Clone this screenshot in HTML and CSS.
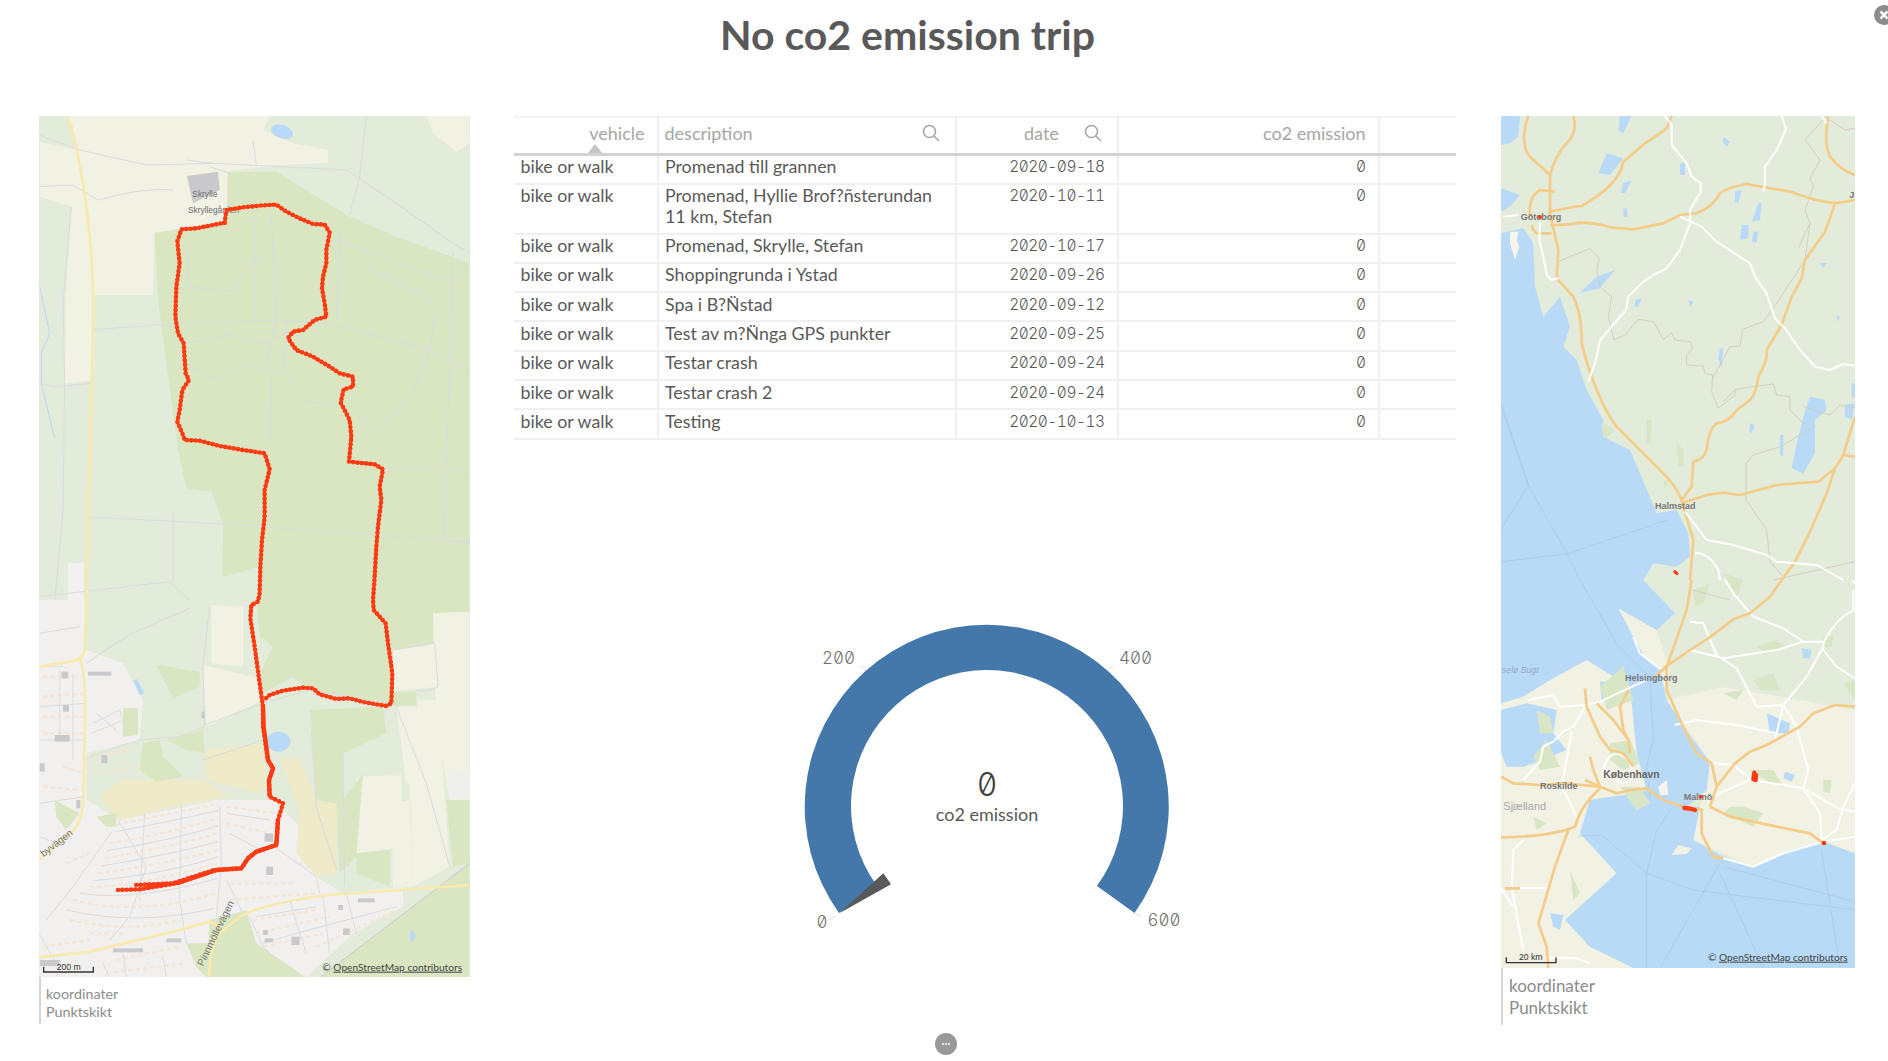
FILE: index.html
```html
<!DOCTYPE html>
<html lang="sv">
<head>
<meta charset="utf-8">
<title>No co2 emission trip</title>
<link rel="stylesheet" href="styles.css">
</head>
<body>
<h1 class="title">No co2 emission trip</h1>
<main class="sheet">
  <section class="panel panel-left">
    <svg class="map map-left" viewBox="28 48 1293 2583" preserveAspectRatio="none">
      <rect class="m-base" x="28" y="48" width="1293" height="2583"/>
      <polygon class="m-cream" points="115,48 720,48 700,90 790,130 895,150 895,190 740,195 595,215 590,370 375,398 370,585 195,585 190,840 105,850 110,580 125,320 30,290 30,125 140,150"/>
      <polygon class="m-forest2" points="830,48 1190,48 1320,130 1320,490 1100,410 950,345 740,215 895,190 895,150"/>
      <polygon class="m-cream" points="1190,48 1320,48 1320,130 1280,155 1210,100"/>
      <polygon class="m-grey" points="472,228 565,215 570,270 490,310"/>
      <polygon class="m-forest" points="595,215 740,215 950,345 1100,410 1320,490 1320,1535 1210,1540 1215,1630 1090,1650 1085,1815 840,1770 790,1730 700,1780 690,1720 730,1640 690,1610 680,1500 690,1400 578,1430 580,1270 545,1175 470,1165 445,1050 385,600 375,398 590,365"/>
      <rect class="m-cream2" x="115" y="1390" width="48" height="110"/>
      <ellipse class="m-water" cx="757" cy="95" rx="34" ry="20" transform="rotate(18 757 95)"/>
      <g transform="translate(0,1500)">
        <polygon class="m-resi" points="28,0 165,0 170,150 280,190 340,300 330,420 170,460 170,600 270,660 560,600 730,600 810,680 810,760 860,830 940,880 1120,860 1120,920 970,1000 830,1133 28,1133"/>
        <polygon class="m-forest" points="540,960 650,930 680,1030 830,1133 530,1133"/>
        <polygon class="m-forest" points="970,1060 1320,790 1320,1133 870,1133"/>
        <polygon class="m-forest" points="470,1030 540,1030 530,1133 500,1100"/>
        <polygon class="m-cream" points="1090,150 1215,130 1225,260 1090,275"/>
        <polygon class="m-cream" points="1210,40 1320,35 1320,600 1260,600 1230,440 1215,260"/>
        <polygon class="m-cream" points="1100,320 1160,320 1190,550 1130,550"/>
        <polygon class="m-cream" points="1165,300 1225,300 1260,800 1150,860 1140,550"/>
        <polygon class="m-cream" points="980,530 1115,525 1120,740 980,760"/>
        <polygon class="m-cream" points="1090,610 1140,600 1150,860 1090,860"/>
        <polygon class="m-cream" points="520,195 690,235 700,300 530,380"/>
        <polygon class="m-cream" points="545,15 640,20 640,200 545,190"/>
        <polygon class="m-tan" points="530,450 700,430 710,560 690,580 530,540"/>
        <polygon class="m-tan" points="750,470 810,480 860,600 920,610 920,820 860,830 800,760 810,640"/>
        <polygon class="m-tan" points="210,590 270,540 520,540 600,590 430,620 270,660"/>
        <polygon class="m-forest" points="380,195 510,215 510,260 430,295"/>
        <polygon class="m-forest" points="280,325 325,325 325,405 280,410"/>
        <polygon class="m-forest" points="340,430 390,420 400,470 460,530 380,545 330,510"/>
        <polygon class="m-forest" points="410,420 520,390 525,460 470,450"/>
        <polygon class="m-forest" points="840,330 1060,320 1070,400 940,460 850,450"/>
        <polygon class="m-forest" points="850,450 940,460 940,600 1000,520 980,770 930,820 920,610 860,600"/>
        <polygon class="m-forest" points="1250,600 1320,600 1320,790 1270,800"/>
        <polygon class="m-forest" points="980,760 1080,750 1080,860 980,820"/>
        <polygon class="m-forest" points="75,600 150,640 110,690 80,650"/>
        <polygon class="m-forest" points="1090,275 1160,275 1160,315 1090,318"/>
        <polygon class="m-forest" points="200,650 260,640 260,680 230,680"/>
        <rect class="m-white" x="1258" y="515" width="62" height="82"/>
        <ellipse class="m-water" cx="746" cy="425" rx="36" ry="30"/>
        <polygon class="m-water" points="310,240 322,238 345,280 330,286"/>
        <ellipse class="m-water" cx="1148" cy="1008" rx="8" ry="18"/>
      </g>
      <g class="m-path">
        <path d="M28,105 L150,150 L350,195 L550,190 L750,200 L950,210 L1100,310 L1270,430 L1320,460"/>
        <path d="M28,260 L130,255 L205,300 Q350,260 430,270"/>
        <path d="M125,320 L100,600 L105,850 L100,1240 L75,1500"/>
        <path d="M190,690 L370,675 L740,660 L900,670 L1200,750 L1320,810"/>
        <path d="M28,850 L70,860 L180,850"/>
        <path d="M175,1250 L580,1272 L1320,1325"/>
        <path d="M470,180 L550,190 M600,220 L540,200 M670,125 L680,190"/>
        <path d="M675,350 L675,660 M725,345 L740,660 L705,815 L765,815 L770,660"/>
        <path d="M725,835 L720,1040 M480,440 L470,560 L610,575 L650,500 L700,480"/>
        <path d="M465,730 L600,705 L700,730 L770,700 M480,800 L560,840 L640,790 L700,815"/>
        <path d="M930,400 L920,660 M920,420 L1270,550 L1320,490"/>
        <path d="M1270,460 L1250,1100 L1245,1320 L1320,1330"/>
        <path d="M770,815 L830,905 L930,915 L1050,990 L1150,880 L1200,750 L1215,640 L1190,590 L1010,500"/>
        <path d="M1060,1105 L1265,1105 L1320,1130"/>
        <path d="M430,1240 L430,1445 M28,1490 L420,1445 L480,1500"/>
        <path d="M990,230 L960,345 M1010,48 L990,230"/>
      </g>
      <path class="m-stream" d="M30,560 L60,700 L35,760 L35,850 L75,1015"/>
      <path class="m-road" d="M115,48 C150,150 190,400 190,600 C190,800 175,1200 170,1500"/>
      <g transform="translate(0,1500)">
        <g class="m-homes">
          <path d="M260,675 Q420,640 565,612"/>
          <path d="M240,730 Q420,700 565,655"/>
          <path d="M225,775 Q420,740 565,700"/>
          <path d="M205,820 Q420,790 565,750"/>
          <path d="M180,860 Q320,860 565,790"/>
          <path d="M130,900 Q320,950 560,880"/>
          <path d="M120,960 Q300,1000 450,960"/>
          <path d="M590,620 L740,640 M590,670 L720,700 M600,850 L800,850 M600,900 L860,880"/>
          <path d="M670,960 L860,930 M680,1000 L900,950 M700,1040 L880,1000 M860,1040 L1100,930"/>
          <path d="M40,230 L160,230 M40,290 L160,280 M40,350 L160,350 M40,400 L160,400"/>
          <path d="M100,500 L160,520 M180,480 L320,440 M180,520 L320,500 M40,560 L150,570"/>
          <path d="M40,1040 L180,1020 M260,1080 L450,1040 M230,1120 L460,1090"/>
          <path d="M110,790 L180,760 M180,1000 L280,1000 M790,780 L900,830"/>
        </g>
        <g class="m-path">
          <path d="M540,20 L520,200 L525,380 L450,410 L330,420 L180,470"/>
          <path d="M170,190 Q300,100 330,90 L480,25"/>
          <path d="M525,375 L700,310 L840,270 L1090,315"/>
          <path d="M1090,150 L1215,130 L1225,260 Q1190,280 1160,270"/>
          <path d="M1100,320 L1190,550 L1260,800 M940,460 L945,860"/>
          <path d="M845,400 L860,620 L920,810 M520,480 L700,420"/>
          <path d="M265,660 L350,800 L300,950 L240,1020 M345,640 L330,900 M455,620 L450,900 L470,1030"/>
          <path d="M570,620 L575,800 L560,950 M250,690 L130,860 L50,960"/>
          <path d="M590,840 L650,960 M740,745 L860,830 L870,880 M660,950 L700,1040 L800,1133"/>
          <path d="M780,900 L830,1060 M880,890 L900,1060 M950,880 L980,1000"/>
          <path d="M700,1030 L800,1000 L950,960 L1100,920 M680,950 L860,920"/>
          <path d="M30,100 L150,80 M30,200 L100,200 M90,210 L90,420 M130,220 L130,480 M30,320 L170,310 M30,420 L170,420"/>
          <path d="M30,610 L165,590 M30,710 L80,730 M28,1000 L100,1130 M220,1090 L240,1133 M400,1070 L410,1133 M280,1060 L290,1133"/>
          <path d="M255,695 Q420,665 565,632 M232,752 Q420,722 565,678 M215,798 Q420,765 565,725 M192,842 Q420,820 565,770"/>
          <path d="M150,880 Q320,905 565,835 M110,930 Q320,980 555,925 M600,700 L710,760 M590,640 L720,660"/>
          <path d="M190,370 L270,330 L290,400 M200,340 L260,390 M185,400 L270,365"/>
        </g>
        <g class="m-grey">
          <rect x="95" y="215" width="20" height="20"/>
          <rect x="175" y="215" width="70" height="12"/>
          <rect x="100" y="315" width="18" height="20"/>
          <rect x="75" y="405" width="45" height="20"/>
          <rect x="215" y="465" width="18" height="25"/>
          <rect x="30" y="490" width="15" height="25"/>
          <rect x="140" y="600" width="12" height="25"/>
          <rect x="705" y="700" width="25" height="25"/>
          <rect x="710" y="800" width="20" height="25"/>
          <rect x="515" y="335" width="10" height="20"/>
          <rect x="250" y="1045" width="90" height="12"/>
          <rect x="410" y="1015" width="45" height="12"/>
          <rect x="700" y="990" width="15" height="15"/>
          <rect x="705" y="1015" width="25" height="12"/>
          <rect x="785" y="1010" width="25" height="25"/>
          <rect x="940" y="985" width="20" height="20"/>
          <rect x="985" y="895" width="50" height="12"/>
          <rect x="925" y="915" width="15" height="15"/>
          <rect x="30" y="1080" width="60" height="18"/>
        </g>
        <path class="m-rail" d="M870,1133 L1320,790"/>
        <path class="m-road" d="M170,0 L165,150 Q160,180 120,185 L28,200"/>
        <path class="m-road" d="M150,180 Q170,200 165,400 L160,620 Q150,680 120,700 L28,780"/>
        <path class="m-road" d="M28,1072 L180,1055 L410,1000 L540,965 Q565,975 580,990"/>
        <path class="m-road" d="M538,1133 Q540,1040 570,1000 L630,950 Q700,910 900,885 L1320,855"/>
        <text class="m-street" x="42" y="772" transform="rotate(-38 42 772)">byvägen</text>
        <text class="m-street" x="520" y="1100" transform="rotate(-64 520 1100)">Pinnmöllevägen</text>
        <text class="m-scale" x="81" y="1110">200 m</text>
        <path class="m-bar" d="M42,1100 V1116 H191 V1100"/>
        <text class="m-attr" x="878" y="1112">© <tspan class="m-under">OpenStreetMap contributors</tspan></text>
      </g>
      <text class="m-label" x="488" y="290">Skrylle</text>
      <text class="m-label" x="475" y="340">Skryllegården</text>
      <defs>
        <g id="route-lines">
          <path d="M585,368 L590,330 L640,322 L700,316 L740,314 L770,335 L810,355 L850,372 L885,374 L900,398 L890,450 L890,490 L880,530 L877,565 L885,610 L890,650 L855,660 L820,690 L790,695 L775,715 L800,750 L850,770 L900,800 L930,820 L970,830 L970,860 L942,868 L933,908 L960,960 L965,1010 L958,1085 L1035,1093 L1060,1108 L1050,1160 L1055,1200 L1045,1280 L1040,1340 L1035,1430 L1030,1500 L1032,1530 L1068,1570 L1075,1630 L1088,1720 L1085,1810 L1070,1818 L1000,1806 L960,1795 L920,1797 L870,1783 L850,1765 L820,1763 L760,1772 L720,1785 L705,1798"/>
          <path d="M585,368 L545,376 L500,385 L455,388 L443,425 L450,490 L440,560 L437,650 L445,700 L462,730 L468,820 L478,840 L458,870 L450,930 L443,965 L458,1000 L465,1020 L510,1022 L570,1038 L640,1050 L705,1060 L720,1108 L705,1170 L705,1250 L697,1320 L692,1400 L690,1480 L685,1505 L665,1515 L662,1555 L675,1640 L690,1750 L700,1820 L700,1880 L715,1980 L730,2005 L718,2040 L720,2090 L760,2110 L745,2160 L740,2235 L680,2255 L655,2275 L635,2305 L560,2310 L440,2350 L330,2368 L262,2370"/>
          <path d="M320,2355 L430,2350 L560,2308"/>
        </g>
      </defs>
      <use class="route-core" href="#route-lines"/>
      <use class="route-dots" href="#route-lines"/>
      <path class="route-thick" d="M700,1820 L702,1880 L715,1980 L730,2005 L718,2040 L720,2090 M745,2160 L740,2235 L680,2255 L655,2275 L635,2305 L560,2310 L440,2350"/>
    </svg>
    <div class="caption caption-left">koordinater<br>Punktskikt</div>
  </section>

  <section class="center">
    <table class="grid">
      <colgroup>
        <col class="c1"><col class="c2"><col class="c3"><col class="c4"><col class="c5">
      </colgroup>
      <thead>
        <tr>
          <th class="num sorted">vehicle<span class="sort-arrow"></span></th>
          <th class="txt"><span class="head-flex">description<svg class="search" viewBox="0 0 18 18"><circle cx="7.5" cy="7.5" r="6"/><path d="M12 12l5 5"/></svg></span></th>
          <th class="num"><span class="head-flex head-date">date<svg class="search" viewBox="0 0 18 18"><circle cx="7.5" cy="7.5" r="6"/><path d="M12 12l5 5"/></svg></span></th>
          <th class="num">co2 emission</th>
          <th></th>
        </tr>
      </thead>
      <tbody>
        <tr><td>bike or walk</td><td>Promenad till grannen</td><td class="mono">2020-09-18</td><td class="mono">0</td><td></td></tr>
        <tr><td>bike or walk</td><td>Promenad, Hyllie Brof?ñsterundan 11 km, Stefan</td><td class="mono">2020-10-11</td><td class="mono">0</td><td></td></tr>
        <tr><td>bike or walk</td><td>Promenad, Skrylle, Stefan</td><td class="mono">2020-10-17</td><td class="mono">0</td><td></td></tr>
        <tr><td>bike or walk</td><td>Shoppingrunda i Ystad</td><td class="mono">2020-09-26</td><td class="mono">0</td><td></td></tr>
        <tr><td>bike or walk</td><td>Spa i B?N̈stad</td><td class="mono">2020-09-12</td><td class="mono">0</td><td></td></tr>
        <tr><td>bike or walk</td><td>Test av m?N̈nga GPS punkter</td><td class="mono">2020-09-25</td><td class="mono">0</td><td></td></tr>
        <tr><td>bike or walk</td><td>Testar crash</td><td class="mono">2020-09-24</td><td class="mono">0</td><td></td></tr>
        <tr><td>bike or walk</td><td>Testar crash 2</td><td class="mono">2020-09-24</td><td class="mono">0</td><td></td></tr>
        <tr><td>bike or walk</td><td>Testing</td><td class="mono">2020-10-13</td><td class="mono">0</td><td></td></tr>
      </tbody>
    </table>
    <svg class="gauge" viewBox="780 600 420 340">
      <path class="g-arc" d="M839,913 A182,182 0 1 1 1134.5,913 L1097,886 A136,136 0 1 0 877,886 Z"/>
      <path class="g-tick" d="M835,916 L829,920 M860,665.5 L866,670.5 M1113,665.5 L1108,670.5 M1135,913 L1141,917"/>
      <polygon class="g-needle" points="839.3,913.3 883.3,873.3 891,884.3"/>
      <text class="g-scale" x="838.5" y="664" text-anchor="middle">200</text>
      <text class="g-scale" x="1135.5" y="664" text-anchor="middle">400</text>
      <text class="g-scale" x="822" y="928" text-anchor="middle">0</text>
      <text class="g-scale" x="1164" y="926" text-anchor="middle">600</text>
      <text class="g-value" x="987" y="796" text-anchor="middle">0</text>
      <text class="g-label" x="987" y="821" text-anchor="middle">co2 emission</text>
    </svg>
  </section>

  <section class="panel panel-right">
    <svg class="map map-right" viewBox="33 48 1062 2556" preserveAspectRatio="none">
      <rect class="r-land" x="33" y="48" width="1062" height="2556"/>
      <polygon class="m-cream" points="530,1800 700,1760 1095,1830 1095,2260 1000,2225 790,2300 610,2220 630,2120 650,2070 660,1985"/>
      <polygon class="m-cream" points="385,1525 500,1590 540,1710 510,1800 470,1680 430,1610"/>
      <polygon class="m-cream" points="33,1810 180,1740 290,1680 420,1760 470,2070 400,2085 300,2100 270,2200 380,2320 225,2460 300,2540 430,2604 33,2604"/>
      <polygon class="m-water" points="33,400 100,385 130,430 135,560 160,650 210,590 240,680 220,740 260,780 290,870 340,960 340,1010 420,1050 450,1120 500,1240 560,1230 595,1300 600,1370 560,1400 490,1390 460,1440 555,1540 500,1590 385,1525 430,1610 470,1680 510,1710 530,1800 580,1880 660,1985 650,2070 590,2120 630,2120 610,2220 700,2270 790,2300 900,2250 1000,2225 1095,2260 1095,2604 430,2604 300,2540 225,2460 380,2320 270,2200 300,2100 400,2085 470,2070 440,1960 420,1760 290,1680 180,1740 100,1790 33,1810"/>
      <polygon class="m-cream" points="545,2265 565,2235 605,2245 590,2262"/>
      <g class="m-water">
        <polygon points="33,48 90,48 85,110 60,130 33,135"/>
        <polygon points="33,265 90,285 60,320 33,335"/>
        <polygon points="350,160 400,175 360,225 325,220"/>
        <polygon points="390,48 425,48 400,100 385,90"/>
        <polygon points="320,530 375,510 330,565 270,578"/>
        <polygon points="735,275 755,270 745,310 735,305"/>
        <polygon points="805,310 815,310 810,360 785,365"/>
        <polygon points="755,375 775,375 775,415 750,420"/>
        <polygon points="790,395 805,395 800,428 785,425"/>
        <polygon points="570,190 585,190 585,225 570,225"/>
        <polygon points="940,950 960,890 1005,900 1010,930 975,960 975,1060 940,1120 905,1105 920,1030"/>
        <polygon points="1085,850 1095,850 1095,895 1085,890"/>
        <polygon points="1065,915 1095,910 1085,960 1065,950"/>
        <polygon points="690,745 700,745 695,805 685,775"/>
        <polygon points="435,600 455,595 445,620 435,620"/>
        <polygon points="595,600 612,605 600,618"/>
        <polygon points="400,250 425,240 405,280 392,278"/>
        <polygon points="400,325 412,325 412,350 400,350"/>
        <polygon points="780,970 795,975 785,1000 778,995"/>
        <polygon points="870,1005 880,1005 880,1070 870,1065"/>
        <polygon points="1040,645 1050,650 1045,665"/>
        <polygon points="700,110 720,125 710,140 698,125"/>
        <polygon points="990,490 1010,490 1000,505"/>
        <polygon points="33,1830 110,1810 200,1830 190,1900 230,1950 130,1990 100,2000 50,2000 33,1960"/>
        <polygon points="330,1745 365,1745 350,1800 335,1800"/>
        <polygon points="50,1950 80,1960 60,1985"/>
        <polygon points="180,2440 220,2445 210,2490 190,2480"/>
        <polygon points="830,1840 900,1870 895,1900 840,1900"/>
        <polygon points="885,2015 915,2025 905,2045 880,2035"/>
        <polygon points="935,1645 965,1650 960,1675 940,1675"/>
      </g>
      <g class="r-green">
        <polygon points="470,960 485,960 480,1030 470,1030"/>
        <polygon points="335,965 375,990 350,1015 338,1005"/>
        <polygon points="560,1025 580,1050 580,1100 565,1095"/>
        <polygon points="520,1140 540,1145 525,1165"/>
        <polygon points="610,1470 660,1450 640,1510 615,1520"/>
        <polygon points="700,1420 760,1440 740,1490"/>
        <polygon points="800,1640 860,1620 890,1640 830,1660"/>
        <polygon points="700,1780 760,1770 740,1800"/>
        <polygon points="790,1740 850,1720 870,1770 810,1770"/>
        <polygon points="1000,1610 1030,1605 1025,1640 1000,1640"/>
        <polygon points="1000,2040 1025,2040 1020,2080 1000,2075"/>
        <polygon points="780,2010 850,2010 880,2060 840,2050"/>
        <polygon points="820,2140 760,2120 720,2120 700,2140 790,2180"/>
        <polygon points="1060,1750 1095,1740 1095,1800"/>
        <polygon points="330,1760 400,1700 430,1800 350,1830"/>
        <polygon points="360,1930 420,1920 450,1990 400,2010 360,1980"/>
        <polygon points="390,2060 450,2060 480,2110 440,2130"/>
        <polygon points="140,1830 180,1850 190,1900 150,1900"/>
        <polygon points="130,2150 170,2170 140,2190"/>
        <polygon points="240,2310 270,2380 250,2400"/>
        <polygon points="130,1970 170,1920 210,2000 150,2010"/>
      </g>
      <g class="r-white">
        <polygon points="60,395 85,395 80,420 88,440 75,480 60,430"/>
        <polygon points="505,2060 530,2040 535,2085 510,2085"/>
      </g>
      <g class="r-border">
        <path d="M205,485 L300,445 L328,475 L320,510 L330,560 L365,590 L355,650 L372,720 L405,705 L445,658 L490,665 L520,718 L545,698 L555,720 L600,725 L608,745 L590,765 L590,795 L640,798 L645,820 L668,825 L665,875 L685,925 L735,885 L735,868 L850,852 L860,885 L900,890 L900,930 L960,990"/>
        <path d="M735,870 L700,905 M668,835 L720,740 L750,738 L758,688 L820,665 L860,610 L945,480 L960,370 L925,445 M960,370 L945,330 L970,260 L960,235 L990,180 L945,120 L1010,48"/>
        <path d="M940,920 L1020,945 L1050,915 L1095,925 M965,985 L870,1040 L790,1065 L768,1090 L768,1200 L830,1290 L840,1385 L880,1430 M1020,60 L1065,90 L1095,85"/>
        <path d="M610,1470 L720,1500 M850,1440 L1095,1385"/>
      </g>
      <g class="r-sea">
        <path d="M33,905 L115,1155 L35,1285 M33,920 L115,1155 L230,1360 L270,1440"/>
        <path d="M33,1385 L230,1362 L530,1260"/>
        <path d="M270,1440 L380,1630 L480,1730 L490,1920 L470,2000 L480,2100"/>
        <path d="M265,2208 L335,2205 L470,2320 L610,2370 L1095,2430"/>
        <path d="M695,2280 L510,2604 M690,2320 L820,2604 M995,2250 L1050,2604 M700,2300 L1095,2405"/>
        <path d="M470,2320 L470,2604 M550,2120 L500,2190 L470,2320"/>
      </g>
      <g class="r-motor">
        <path d="M115,48 C95,100 100,150 120,170 L180,225 L180,340 L205,450 L200,535 L250,590 Q275,640 275,730 C300,830 340,930 380,980 L500,1100 C540,1140 570,1170 580,1220 L610,1320 L600,1440"/>
        <path d="M250,48 Q265,100 225,135 Q195,170 180,225"/>
        <path d="M180,335 Q250,320 275,318 C340,280 390,240 400,185 L465,130 Q510,100 530,85 L545,48"/>
        <path d="M180,375 Q240,375 270,368 Q330,370 360,382 L430,388 L520,370 L570,345 L620,340 Q670,320 690,280 Q710,262 770,252 L900,275 L970,298 L1035,310 L1095,300"/>
        <path d="M1035,310 Q1015,370 1005,395 L945,480 L935,535 L905,590 L875,675 L830,750 Q835,780 805,830 Q800,880 780,900 L740,930 Q720,965 680,970 Q655,990 650,1050 Q640,1080 610,1085 L605,1160 L575,1200"/>
        <path d="M575,1210 L650,1185 L700,1178 L750,1185 L860,1155 L985,1145 L1035,1105 L1060,1065 L1095,1070"/>
        <path d="M1035,1105 L1010,1180 L960,1295 L915,1385 L875,1440"/>
        <path d="M1095,950 L1060,1065"/>
        <path d="M1015,48 Q1000,130 1020,170 Q1050,210 1095,225"/>
        <path d="M120,345 Q115,290 150,270 L195,275 M125,375 Q130,400 145,400 L185,400"/>
      </g>
      <g class="r-minor">
        <path d="M525,48 L545,75 L545,135 L590,190 L605,230 L632,250 L632,275 L600,330 L600,370 L570,450 L530,505 L490,525 L460,545 L415,590 L408,630 L330,720 L318,780 L295,845"/>
        <path d="M570,350 L635,380 L680,425 L780,490 L795,530 L830,580 L855,655 L885,685 L930,750 L975,800 L1020,810 L1060,792 L1095,797"/>
        <path d="M875,48 L888,88 L860,150 L825,200 L825,250 L820,275"/>
        <path d="M995,48 L1010,70 M40,350 L85,345"/>
        <path d="M150,365 L148,420 L160,470 L170,525 L185,540 L205,535"/>
        <path d="M585,1235 L650,1320 L730,1335 L830,1365 L860,1385 L980,1395 L1060,1440"/>
        <path d="M615,1358 Q660,1360 685,1410 L690,1440"/>
      </g>
      <g transform="translate(0,1440)">
        <g class="r-minor">
          <path d="M705,0 L730,40 L790,110 L880,145 L940,185 L1000,185 L1000,210 L1040,260 L1095,295"/>
          <path d="M1000,190 Q1040,110 1095,90 M1085,0 L1095,10 M1090,30 V90"/>
          <path d="M600,125 L640,130 L660,180 L680,225 L740,265 L800,380 L880,375 L920,440 L955,570 L940,625 L990,700 L995,780"/>
          <path d="M600,210 L700,235 L860,210 L940,185"/>
          <path d="M1000,200 L950,290 L880,375 L855,480"/>
          <path d="M555,435 L620,420 L740,435 L860,460"/>
          <path d="M670,550 L730,555 L785,600 L940,625 L1045,685 L1095,695"/>
          <path d="M665,650 L780,600 M1095,610 L1060,680 L1040,750 L995,780"/>
          <path d="M430,170 L450,220 L510,265"/>
          <path d="M115,360 L190,345 L210,380 L285,375 L330,365 L415,325 L470,300"/>
          <path d="M285,380 L250,440 L220,455 L190,485 L160,500 L150,545 L100,600"/>
          <path d="M245,455 L215,620 L265,720"/>
          <path d="M340,590 Q340,530 380,520 Q440,540 420,600 Q400,620 380,600"/>
          <path d="M700,835 L790,860 L880,820 L1000,785 L1095,770"/>
          <path d="M100,780 L70,810 L65,920 L90,1060 L100,1110"/>
          <path d="M90,925 L175,925 M175,1133 L260,1135 L300,1150 M33,925 L70,980"/>
        </g>
        <g class="r-motor">
          <path d="M605,0 L590,90 L555,190 L530,260 L495,290"/>
          <path d="M875,0 L840,50 L780,100 L730,118 L655,175 L600,210 L520,265"/>
          <path d="M530,260 L530,330 L570,420 L620,520 L665,550 L680,620 L660,680"/>
          <path d="M1095,380 L1035,375 L970,400 L930,440 L830,495 L780,515 L735,550 L680,620"/>
          <path d="M660,680 L720,710 L860,740 L960,760 L1000,790"/>
          <path d="M635,690 L635,760 L670,830 L700,835"/>
          <path d="M640,690 L580,680 L520,660 L470,625 L420,630 L380,640 L330,620 L285,600"/>
          <path d="M330,625 Q270,680 255,740 Q180,770 33,772"/>
          <path d="M235,750 L195,860 L145,1030 L170,1100 L175,1163"/>
          <path d="M285,325 L290,380 L330,470 L360,510 L400,520 L430,560"/>
          <path d="M320,370 L370,420 L415,480 L420,520 M415,330 L390,380 L400,450 L420,490 M300,530 L310,570 L330,620"/>
          <path d="M33,590 L70,610 L150,615 L220,610 L330,620 M45,925 L90,925"/>
        </g>
        <text class="r-city" x="405" y="303">Helsingborg</text>
        <text class="r-big" x="340" y="593">København</text>
        <text class="r-city" x="150" y="627">Roskilde</text>
        <text class="r-city" x="581" y="660">Malmö</text>
        <text class="r-region" x="40" y="690">Sjælland</text>
        <text class="r-sealabel" x="36" y="280">selø Bugt</text>
        <text class="m-scale" x="87" y="1139">20 km</text>
        <path class="m-bar" d="M49,1132 V1148 H198 V1132"/>
        <text class="m-attr" x="654" y="1142">© <tspan class="m-under">OpenStreetMap contributors</tspan></text>
        <path class="r-hit" d="M793,578 L790,598 M798,585 L797,600"/>
        <circle class="r-dot" cx="632" cy="650" r="6"/>
        <circle class="r-dot" cx="1002" cy="789" r="7"/>
        <path class="r-hit" d="M583,684 L600,686 L615,690"/>
      </g>
      <text class="r-city" x="92" y="359">Göteborg</text>
      <text class="r-city" x="495" y="1226">Halmstad</text>
      <text class="r-city" x="1078" y="295">J</text>
      <circle class="r-dot" cx="150" cy="351" r="6"/>
      <path class="r-hit2" d="M554,1415 L561,1421"/>
    </svg>
    <div class="caption caption-right">koordinater<br>Punktskikt</div>
  </section>
</main>
<div class="more" aria-label="Mer"><span></span><span></span><span></span></div>
<div class="close" aria-label="Stäng"><svg viewBox="0 0 20 20"><path d="M6.5 6.5l7 7M13.500 6.500l-7 7"/></svg></div>
</body>
</html>
```
FILE: styles.css
```css
* { box-sizing: border-box; }
html, body { margin: 0; padding: 0; }
body {
  width: 1888px;
  height: 1061px;
  overflow: hidden;
  background: #fff;
  font-family: "Lato", "Liberation Sans", sans-serif;
  color: #595959;
  position: relative;
}
.title {
  margin: 0;
  height: 116px;
  padding: 11px 73px 0 0;
  text-align: center;
  font-family: "Lato", "Liberation Sans", sans-serif;
  font-weight: 700;
  font-size: 41px;
  line-height: 48px;
  color: #595959;
}
.sheet { display: flex; align-items: flex-start; padding-left: 39px; }
.panel { display: flex; flex-direction: column; }
.panel-left { width: 431px; }
.panel-right { width: 354px; margin-left: 45px; }
.map { display: block; width: 100%; }
.map-left { height: 861px; }
.map-right { height: 852px; }
.caption { border-left: 2px solid #d4d4d4; color: #8c8c8c; }
.caption-left { height: 47px; padding: 8px 0 0 5px; font-size: 14.300px; line-height: 18px; }
.caption-right { height: 57px; padding: 7px 0 0 6px; font-size: 17px; line-height: 22px; }

.center { width: 942px; margin-left: 44px; display: flex; flex-direction: column; }
.grid { width: 942px; table-layout: fixed; border-collapse: collapse; font-size: 17.800px; line-height: 20.500px; }
.c1 { width: 143.500px; } .c2 { width: 298.500px; } .c3 { width: 161.500px; } .c4 { width: 261px; } .c5 { width: 77.500px; }
.grid thead tr { border-top: 2px solid #f2f2f2; border-bottom: 3px solid #d2d2d2; }
.grid th {
  height: 37px;
  padding: 0 12px 5px 6px;
  font-size: 18px;
  font-weight: 400;
  color: #a6a6a6;
  text-align: left;
  border-right: 2px solid #f0f0f0;
  position: relative;
}
.grid th.num { text-align: right; }
.grid th:last-child, .grid td:last-child { border-right: 0; }
.grid td {
  padding: 0.500px 12px 6.300px 6.500px;
  vertical-align: top;
  border-right: 2px solid #f0f0f0;
  border-bottom: 2px solid #f0f0f0;
}
.grid td.mono {
  padding-top: 1.500px;
  padding-bottom: 5.300px;
  text-align: right;
  font-family: "Inter", monospace;
  font-size: 15.500px;
  font-weight: 300;
  letter-spacing: -0.500px;
  font-variant-numeric: tabular-nums slashed-zero;
  color: #595959;
}
.head-flex { display: flex; align-items: center; justify-content: space-between; padding-right: 3px; }
.head-date { padding-left: 61px; padding-right: 3px; }
.search { width: 18px; height: 18px; fill: none; stroke: #a6a6a6; stroke-width: 1.600; }
.sort-arrow {
  position: absolute;
  left: 74px;
  bottom: 0;
  border-left: 7px solid transparent;
  border-right: 7px solid transparent;
  border-bottom: 9px solid #c4c4c4;
}

.gauge { display: block; width: 420px; height: 340px; margin: 160px 0 0 266px; }
.g-arc { fill: #4477aa; }
.g-tick { stroke: #dcdcdc; stroke-width: 1; fill: none; }
.g-needle { fill: #595959; }
.g-scale { font-family: "Inter", monospace; font-weight: 300; font-variant-numeric: tabular-nums slashed-zero; font-size: 17px; fill: #707070; }
.g-value { font-family: "Inter", monospace; font-weight: 300; font-variant-numeric: tabular-nums slashed-zero; font-size: 32px; fill: #404040; }
.g-label { font-family: "Lato", "Liberation Sans", sans-serif; font-size: 18px; fill: #595959; }

.m-base { fill: #e3ebda; }
.m-cream { fill: #f1f1e4; }
.m-cream2 { fill: #f2f0ee; }
.m-forest { fill: #dae6c2; }
.m-forest2 { fill: #e3ebda; }
.m-grey { fill: #c9c9cc; }
.m-water { fill: #b9daf7; }
.m-resi { fill: #f2f0ee; }
.m-tan { fill: #efebc9; }
.m-white { fill: #efefec; }
.m-path { fill: none; stroke: #d9dcdf; stroke-width: 3; }
.m-stream { fill: none; stroke: #b9daf7; stroke-width: 3; }
.m-homes { fill: none; stroke: #f3e6d6; stroke-width: 7; stroke-dasharray: 14 8; }
.m-road { fill: none; stroke: #f8e9ac; stroke-width: 8; }
.m-rail { fill: none; stroke: #c8c8c8; stroke-width: 3; }
.m-label { font-family: "Liberation Sans", sans-serif; font-size: 25px; fill: #6f6f6f; }
.m-street { font-family: "Liberation Sans", sans-serif; font-size: 30px; fill: #777; }
.m-scale { font-family: "Liberation Sans", sans-serif; font-size: 26px; fill: #333; }
.m-bar { fill: none; stroke: #333; stroke-width: 4; }
.m-attr { font-family: "Lato", sans-serif; font-size: 30.500px; fill: #444; }
.m-under { text-decoration: underline; }
.route-core {
  fill: none;
  stroke: #ff3b14;
  stroke-width: 8;
  stroke-linejoin: round;
}
.route-dots {
  fill: none;
  stroke: #ff3b14;
  stroke-width: 14;
  stroke-linecap: round;
  stroke-dasharray: 0 13;
}
.route-thick { fill: none; stroke: #ff3b14; stroke-width: 13; stroke-linejoin: round; }

.r-land { fill: #e3ebda; }
.r-green { fill: #d9e6c6; }
.r-white { fill: #f5f5ee; }
.r-border { fill: none; stroke: #cfcabf; stroke-width: 2.500; }
.r-sea { fill: none; stroke: #a9c6e2; stroke-width: 2; }
.r-motor { fill: none; stroke: #f4cc87; stroke-width: 8; stroke-linejoin: round; }
.r-minor { fill: none; stroke: #fff; stroke-width: 6; stroke-linejoin: round; }
.r-city { font-family: "Liberation Sans", sans-serif; font-weight: 700; font-size: 27px; fill: #777; }
.r-big { font-family: "Liberation Sans", sans-serif; font-weight: 700; font-size: 31px; fill: #666; }
.r-region { font-family: "Liberation Sans", sans-serif; font-size: 33px; fill: #aaa; }
.r-sealabel { font-family: "Liberation Sans", sans-serif; font-style: italic; font-size: 26px; fill: #93a9cf; }
.r-dot { fill: #ff3b14; }
.r-hit { fill: none; stroke: #ff3b14; stroke-width: 13; stroke-linecap: round; }
.r-hit2 { fill: none; stroke: #ff3b14; stroke-width: 9; stroke-linecap: round; }

.more {
  position: absolute;
  left: 935px;
  top: 1033px;
  width: 22px;
  height: 22px;
  border-radius: 50%;
  background: #999;
  display: flex;
  align-items: center;
  justify-content: center;
  gap: 1px;
}
.more span { width: 2px; height: 2px; background: #fff; border-radius: 50%; }
.close {
  position: absolute;
  left: 1874px;
  top: 5px;
  width: 20px;
  height: 20px;
  border-radius: 50%;
  background: #8c8c8c;
}
.close svg { display: block; width: 20px; height: 20px; fill: none; stroke: #fff; stroke-width: 2.500; }
```
